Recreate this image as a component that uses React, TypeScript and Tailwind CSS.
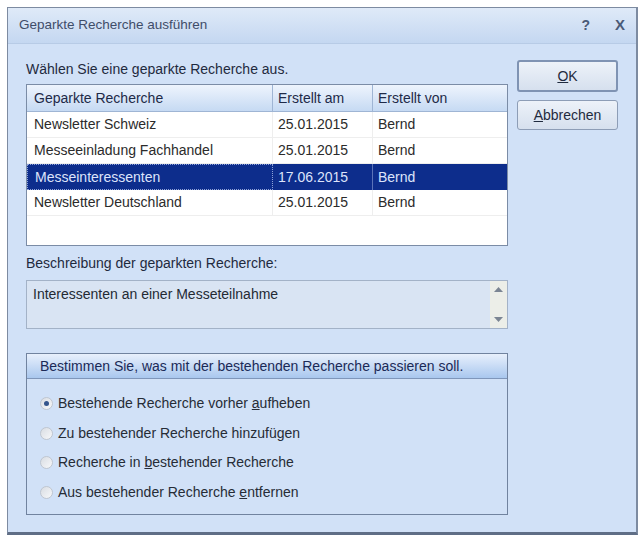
import React from "react";

const rows = [
  { name: "Newsletter Schweiz", date: "25.01.2015", by: "Bernd" },
  { name: "Messeeinladung Fachhandel", date: "25.01.2015", by: "Bernd" },
  { name: "Messeinteressenten", date: "17.06.2015", by: "Bernd", selected: true },
  { name: "Newsletter Deutschland", date: "25.01.2015", by: "Bernd" },
];

const Radio = ({ checked, children }: { checked?: boolean; children: React.ReactNode }) => (
  <div className="flex items-center h-[29.5px]">
    <span className="flex items-center justify-center w-[13px] h-[13px] rounded-full border border-[#bfc6d0] bg-gradient-to-br from-[#d9dde3] to-[#f7f8fa]">
      {checked && <span className="w-[5px] h-[5px] rounded-full bg-[#34558c]" />}
    </span>
    <span className="ml-[5px]">{children}</span>
  </div>
);

export default function App() {
  return (
    <div
      className="w-[643px] h-[537px] bg-white pt-[7px] pl-[7px] text-[14px] text-[#262c36]"
      style={{ fontFamily: '"Liberation Sans", Arial, sans-serif' }}
    >
      <div className="w-[631px] h-[528px] flex flex-col border border-[#7d8ba1] border-b-[3px] border-b-[#5f6e86] border-r-2 bg-[#d1e1f7]">
        {/* title bar */}
        <div className="h-[36px] flex items-center pl-[11px] pr-[11px] bg-gradient-to-b from-[#dfeaf8] to-[#c4d7f1] border-b border-[#b7cbe6]">
          <span className="text-[13.5px] text-[#3f4d69]">Geparkte Recherche ausführen</span>
          <span className="ml-auto font-bold text-[#4a5a78] text-[14px]">?</span>
          <span className="ml-[25px] font-bold text-[#4a5a78] text-[15px]">X</span>
        </div>

        <div className="flex pt-[15px] pl-[18px]">
          <div className="w-[482px] flex flex-col">
            <div className="h-[20px] leading-[20px] text-[#1f2a3e]">Wählen Sie eine geparkte Recherche aus.</div>

            {/* list */}
            <div className="mt-[5px] h-[162px] border border-[#7b8ca6] bg-white">
              <div className="flex h-[27px] items-center bg-gradient-to-b from-[#eef4fd] to-[#c6daf3] border-b border-[#9fb5d4] text-[#1e2a48]">
                <div className="w-[246px] h-full flex items-center pl-[7px] border-r border-[#9fb5d4]">Geparkte Recherche</div>
                <div className="w-[100px] h-full flex items-center pl-[5px] border-r border-[#9fb5d4]">Erstellt am</div>
                <div className="flex-1 h-full flex items-center pl-[5px]">Erstellt von</div>
              </div>
              {rows.map((r) => (
                <div
                  key={r.name}
                  className={
                    r.selected
                      ? "flex h-[26px] items-center bg-[#0d2d8c] text-[#dde4fb]"
                      : "flex h-[26px] items-center border-b border-[#eeeeee] text-[#2b2b2b]"
                  }
                >
                  <div
                    className={
                      r.selected
                        ? "w-[246px] h-full flex items-center pl-[7px] border border-dotted border-[#8ea2d8]"
                        : "w-[246px] h-full flex items-center pl-[7px] border-r border-[#eeeeee]"
                    }
                  >
                    {r.name}
                  </div>
                  <div
                    className={
                      r.selected
                        ? "w-[100px] h-full flex items-center pl-[5px] border-r border-[#5b73b8]"
                        : "w-[100px] h-full flex items-center pl-[5px] border-r border-[#eeeeee]"
                    }
                  >
                    {r.date}
                  </div>
                  <div className="flex-1 h-full flex items-center pl-[5px]">{r.by}</div>
                </div>
              ))}
            </div>

            <div className="mt-[7px] h-[20px] leading-[20px] text-[#1f2a3e]">Beschreibung der geparkten Recherche:</div>

            {/* description */}
            <div className="mt-[7px] h-[49px] flex border border-[#a3b2c7] bg-[#d9e4f3]">
              <div className="flex-1 pl-[6px] pt-[3px] text-[#242a33]">Interessenten an einer Messeteilnahme</div>
              <div className="w-[17px] flex flex-col items-center justify-between py-[6px] bg-[#eceee8]">
                <svg width="9" height="5" viewBox="0 0 9 5"><path d="M0 5 L4.5 0 L9 5 Z" fill="#7b8593" /></svg>
                <svg width="9" height="5" viewBox="0 0 9 5"><path d="M0 0 L4.5 5 L9 0 Z" fill="#7b8593" /></svg>
              </div>
            </div>

            {/* group box */}
            <div className="mt-[24px] h-[162px] border border-[#71839f]">
              <div className="h-[25px] flex items-center pl-[13px] bg-gradient-to-b from-[#e8f0fc] to-[#a9c7ee] border-b border-[#7f96ba] text-[#1b2a57]">
                Bestimmen Sie, was mit der bestehenden Recherche passieren soll.
              </div>
              <div className="pl-[13px] pt-[10px] text-[#262c36]">
                <Radio checked>
                  Bestehende Recherche vorher <u>a</u>ufheben
                </Radio>
                <Radio>Zu bestehender Recherche hinzufügen</Radio>
                <Radio>
                  Recherche in <u>b</u>estehender Recherche
                </Radio>
                <Radio>
                  Aus bestehender Recherche <u>e</u>ntfernen
                </Radio>
              </div>
            </div>
          </div>

          {/* buttons */}
          <div className="ml-[9px] flex flex-col gap-[8px] pt-[1px]">
            <button className="w-[101px] h-[32px] rounded-[3px] border-2 border-[#7f93b3] bg-gradient-to-b from-[#edf2f9] to-[#d6e0ee] text-[#1f2a3e]">
              <u>O</u>K
            </button>
            <button className="w-[101px] h-[30px] rounded-[3px] border border-[#8d9db6] bg-gradient-to-b from-[#edf2f9] to-[#d6e0ee] text-[#1f2a3e]">
              <u>A</u>bbrechen
            </button>
          </div>
        </div>
      </div>
    </div>
  );
}
